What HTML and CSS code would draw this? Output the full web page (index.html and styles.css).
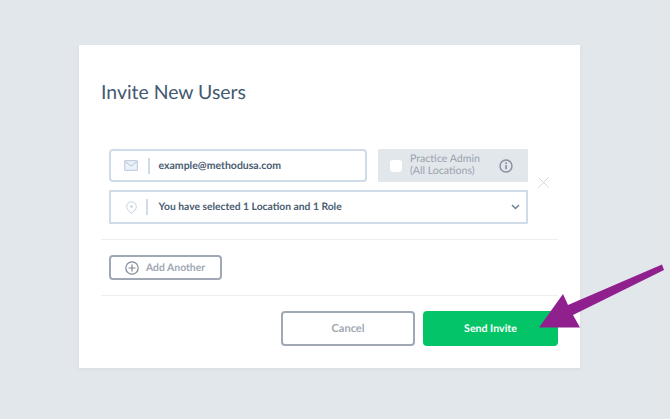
FILE: index.html
```html
<!DOCTYPE html>
<html lang="en">
<head>
<meta charset="utf-8">
<title>Invite New Users</title>
<link rel="stylesheet" href="styles.css">
</head>
<body>
<main class="card">
  <h1 class="title">Invite New Users</h1>
  <section class="invite">
    <div class="fields">
      <div class="row-top">
        <div class="field email">
          <svg class="ico-mail" width="14" height="11" viewBox="0 0 14 11"><rect x="0.6" y="0.6" width="12.8" height="9.8" rx="1" fill="#eef2f8" stroke="#c3d0e2" stroke-width="1.2"/><path d="M1 1.5 7 6l6-4.5" fill="none" stroke="#c3d0e2" stroke-width="1.2"/></svg>
          <span class="sep"></span>
          <span class="value">example@methodusa.com</span>
        </div>
        <div class="admin">
          <span class="check"></span>
          <span class="admin-label">Practice Admin<br>(All Locations)</span>
          <svg class="ico-info" width="14" height="14" viewBox="0 0 14 14"><circle cx="7" cy="7" r="6" fill="none" stroke="#8b929f" stroke-width="1.5"/><rect x="6.2" y="6" width="1.7" height="4.2" fill="#8b929f"/><rect x="6.2" y="3.3" width="1.7" height="1.7" fill="#8b929f"/></svg>
        </div>
      </div>
      <div class="field select">
        <svg class="ico-pin" width="11" height="13" viewBox="0 0 11 13"><path d="M5.5 12.2C2.5 10.2.7 8 .7 5.6a4.8 4.8 0 0 1 9.6 0c0 2.400-1.800 4.600-4.800 6.600Z" fill="none" stroke="#c3d0e2" stroke-width="1"/><circle cx="5.500" cy="5.500" r="1.300" fill="#c3d0e2"/></svg>
        <span class="sep"></span>
        <span class="value">You have selected 1 Location and 1 Role</span>
        <svg class="ico-chev" width="9" height="6" viewBox="0 0 9 6"><path d="M1 1l3.500 3.500L8 1" fill="none" stroke="#6d7f96" stroke-width="1.500"/></svg>
      </div>
    </div>
    <svg class="ico-close" width="11" height="11" viewBox="0 0 11 11"><path d="M.5.5l10 10M10.500.5l-10 10" stroke="#d3d7dd" stroke-width="1"/></svg>
  </section>
  <div class="add-row">
    <button class="add" type="button">
      <svg width="14" height="14" viewBox="0 0 14 14"><circle cx="7" cy="7" r="6.200" fill="none" stroke="#7f8896" stroke-width="1.200"/><path d="M7 3.500v7M3.500 7h7" stroke="#7f8896" stroke-width="1.200"/></svg>
      <span>Add Another</span>
    </button>
  </div>
  <div class="actions">
    <button class="btn cancel" type="button">Cancel</button>
    <button class="btn send" type="button">Send Invite</button>
  </div>
</main>
<svg class="arrow" width="670" height="419" viewBox="0 0 670 419"><path d="M662 264.500 664 270 573 315 580 327.500 539 327.500 563 294 568 305Z" fill="#91208f"/></svg>
</body>
</html>
```
FILE: styles.css
```css
* { box-sizing: border-box; }
html, body { margin: 0; height: 419px; overflow: hidden; }
body {
  background: #e2e7ec;
  font-family: "Lato", "Liberation Sans", sans-serif;
  text-rendering: geometricPrecision;
  padding: 45px 0 0 79px;
}
.card {
  width: 501px;
  height: 323px;
  background: #fff;
  padding: 36px 22px 0 22px;
  box-shadow: 0 1px 3px rgba(120,135,150,.12);
}
.title {
  margin: 0;
  font-size: 19.4px;
  line-height: 24px;
  font-weight: 400;
  color: #435871;
}
.invite {
  display: flex;
  align-items: center;
  margin-top: 44px;
  padding: 0 0 15px 8px;
  border-bottom: 1px solid #eceef1;
  width: 457px;
}
.fields { width: 419px; display: flex; flex-direction: column; gap: 8px; }
.row-top { display: flex; gap: 11px; }
.field {
  display: flex;
  align-items: center;
  height: 34px;
  background: #fff;
  border: 2px solid #cfdbe9;
  font-size: 10.5px;
  font-weight: 700;
  color: #4a5c72;
}
.row-top .field, .row-top .admin { height: 33px; }
.email { width: 258px; border-radius: 4px; padding-left: 13px; }
.select { width: 419px; border-radius: 1px; padding-left: 15px; font-size: 10.3px; }
.sep { width: 1.500px; height: 16px; background: #cfdbe9; }
.email .sep { margin: 0 9px 0 10px; }
.select .sep { margin: 0 11px 0 9px; }
.ico-chev { margin-left: auto; margin-right: 6px; }
.admin {
  width: 150px;
  background: #e2e7ec;
  border-radius: 1px;
  display: flex;
  align-items: center;
  padding-left: 12px;
  font-size: 10.6px;
  line-height: 11.5px;
  color: #9aa2ae;
}
.check { width: 12px; height: 12px; border-radius: 3px; background: #fff; margin-right: 8px; }
.admin-label { width: 75px; }
.ico-info { margin-left: 14px; }
.ico-close { margin: 0 0 8px 10px; }
.add-row { height: 56px; border-bottom: 1px solid #eceef1; width: 457px; padding: 15px 0 0 8px; }
.add {
  display: flex;
  align-items: center;
  gap: 7px;
  width: 113px;
  height: 25px;
  padding: 0 0 0 14px;
  background: #fff;
  border: 2px solid #a0a8b6;
  border-radius: 4px;
  font-family: inherit;
  text-rendering: inherit;
  font-size: 10.4px;
  font-weight: 700;
  color: #a0a8b3;
}
.actions { width: 457px; display: flex; justify-content: flex-end; gap: 8px; padding-top: 15px; }
.btn {
  height: 35px;
  border-radius: 4px;
  font-family: inherit;
  text-rendering: inherit;
  font-size: 10.6px;
  font-weight: 700;
  padding: 0;
}
.cancel { width: 134px; background: #fff; border: 2px solid #a0a8b6; color: #a0a8b3; font-size: 11px; }
.send { width: 135px; background: #03c567; border: 0; color: #fff; }
.arrow { position: absolute; left: 0; top: 0; pointer-events: none; }
```
